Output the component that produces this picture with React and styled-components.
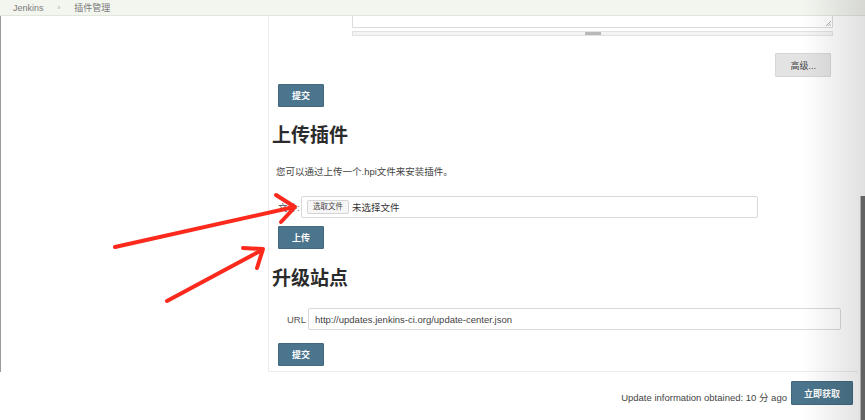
import React from 'react'
import styled, { createGlobalStyle } from 'styled-components'

const GlobalStyle = createGlobalStyle`
  html, body {
    margin: 0;
    padding: 0;
    background: #fff;
    overflow: hidden;
  }
  body {
    font-family: "Liberation Sans", "Noto Sans CJK SC", sans-serif;
    color: #333;
  }
`

const Page = styled.div`
  position: relative;
  width: 865px;
  height: 420px;
  overflow: hidden;
`

// ----- Breadcrumb bar
const Breadcrumb = styled.div`
  height: 15px;
  display: flex;
  align-items: center;
  gap: 14px;
  padding-left: 13px;
  background: #f3f5ef;
  border-bottom: 1px solid #e3e6dc;
  font-size: 9px;
  color: #777;
`

const Crumb = styled.span`
  color: #7a7a7a;
`

const CrumbSep = styled.span`
  font-size: 8px;
  color: #999;
`

// ----- Layout
const Layout = styled.div`
  display: flex;
`

const Sidebar = styled.div`
  width: 267px;
  flex-shrink: 0;
  border-left: 1px solid #9a9a9a;
`

const MainPanel = styled.section`
  width: 580px;
  padding: 0 0 5px 9px;
  border-left: 1px solid #ececec;
  border-bottom: 1px solid #ececec;
  display: flex;
  flex-direction: column;
`

const TextareaTail = styled.div`
  position: relative;
  margin-left: 74px;
  width: 479px;
  height: 11px;
  border: 1px solid #dcdcdc;
  border-top: none;
`

const ResizeGrip = styled.svg`
  position: absolute;
  right: 1px;
  bottom: 1px;
`

const GripBar = styled.div`
  margin: 3px 0 0 74px;
  width: 479px;
  height: 3px;
  border: 1px solid #e2e2e2;
  background: #f4f4f4;
  display: flex;
  justify-content: center;
  align-items: center;
`

const GripKnob = styled.div`
  width: 16px;
  height: 3px;
  background: #b9b9b9;
`

const Row = styled.div`
  display: flex;
  align-items: center;
  justify-content: ${p => (p.$end ? 'flex-end' : 'flex-start')};
  margin-top: ${p => p.$top}px;
  padding-right: ${p => p.$right || 0}px;
`

const Button = styled.button`
  height: ${p => p.$h || 23}px;
  padding: 0 ${p => p.$px || 13}px;
  border: 1px solid ${p => (p.$gray ? '#d6d6d6' : '#41687d')};
  border-radius: 1px;
  background: ${p => (p.$gray ? '#e3e3e3' : '#4b758c')};
  color: ${p => (p.$gray ? '#444' : '#fff')};
  font-family: inherit;
  font-size: 9px;
  font-weight: ${p => (p.$gray ? 'normal' : 'bold')};
  cursor: pointer;
`

const Heading = styled.h2`
  margin: ${p => p.$top}px 0 0 -6px;
  font-size: 19px;
  line-height: 23px;
  font-weight: bold;
  color: #2b2b2b;
`

const Description = styled.p`
  margin: 19px 0 0 -2px;
  font-size: 9.5px;
  line-height: 12px;
  color: #444;
`

const FieldLabel = styled.span`
  font-size: 9.5px;
  color: #555;
  width: ${p => p.$w}px;
  padding-left: ${p => p.$pl || 0}px;
  flex-shrink: 0;
`

const FileBox = styled.div`
  width: 450px;
  height: 20px;
  border: 1px solid #d9d9d9;
  border-radius: 2px;
  display: flex;
  align-items: center;
  gap: 3px;
  padding-left: 5px;
`

const FileButton = styled.span`
  height: 12px;
  padding: 0 5px;
  border: 1px solid #d4d4d4;
  border-radius: 2px;
  background: #f6f6f6;
  font-size: 7.5px;
  line-height: 12px;
  color: #444;
`

const FileHint = styled.span`
  font-size: 9.5px;
  color: #333;
`

const UrlInput = styled.input`
  width: 519px;
  height: 20px;
  box-sizing: content-box;
  padding: 0 6px;
  border: 1px solid #d9d9d9;
  border-radius: 2px;
  font-family: inherit;
  font-size: 9.5px;
  color: #444;
  outline: none;
`

// ----- Footer
const Footer = styled.div`
  display: flex;
  justify-content: flex-end;
  align-items: center;
  gap: 4px;
  margin-top: 9px;
  padding-right: 12px;
`

const UpdateInfo = styled.span`
  font-size: 9.5px;
  color: #444;
  margin-top: 8px;
`

// ----- Overlays
const RightShade = styled.div`
  position: absolute;
  top: 0;
  right: 0;
  bottom: 0;
  width: 62px;
  background: linear-gradient(to right, rgba(0, 0, 0, 0), rgba(0, 0, 0, 0.12));
  pointer-events: none;
`

const ScrollThumb = styled.div`
  position: absolute;
  right: 0;
  top: 196px;
  bottom: 0;
  width: 4px;
  background: #626262;
  border-left: 1px solid #aaa;
`

const Arrows = styled.svg`
  position: absolute;
  left: 0;
  top: 0;
  pointer-events: none;
`

const arrowStyle = {
  fill: 'none',
  stroke: '#fb2a1c',
  strokeWidth: 4,
  strokeLinecap: 'round',
  strokeLinejoin: 'round',
}

export default function App() {
  return (
    <Page>
      <GlobalStyle />
      <Breadcrumb>
        <Crumb>Jenkins</Crumb>
        <CrumbSep>›</CrumbSep>
        <Crumb>插件管理</Crumb>
      </Breadcrumb>
      <Layout>
        <Sidebar />
        <MainPanel>
          <TextareaTail>
            <ResizeGrip width="6" height="6" viewBox="0 0 6 6">
              <path d="M1 6 L6 1 M3.5 6 L6 3.5" stroke="#999" strokeWidth="0.8" />
            </ResizeGrip>
          </TextareaTail>
          <GripBar>
            <GripKnob />
          </GripBar>
          <Row $end $top={17} $right={27}>
            <Button $gray $h={24} $px={14}>高级...</Button>
          </Row>
          <Row $top={7}>
            <Button $px={13}>提交</Button>
          </Row>

          <Heading $top={17}>上传插件</Heading>
          <Description>您可以通过上传一个.hpi文件来安装插件。</Description>
          <Row $top={18}>
            <FieldLabel $w={23}>文件:</FieldLabel>
            <FileBox>
              <FileButton>选取文件</FileButton>
              <FileHint>未选择文件</FileHint>
            </FileBox>
          </Row>
          <Row $top={8}>
            <Button $px={13}>上传</Button>
          </Row>

          <Heading $top={18}>升级站点</Heading>
          <Row $top={18}>
            <FieldLabel $w={21} $pl={9}>URL</FieldLabel>
            <UrlInput readOnly value="http://updates.jenkins-ci.org/update-center.json" />
          </Row>
          <Row $top={13}>
            <Button $px={13}>提交</Button>
          </Row>
        </MainPanel>
      </Layout>
      <Footer>
        <UpdateInfo>Update information obtained: 10 分 ago</UpdateInfo>
        <Button $h={24} $px={12}>立即获取</Button>
      </Footer>

      <RightShade />
      <ScrollThumb />

      <Arrows width="865" height="420" viewBox="0 0 865 420">
        <g style={arrowStyle}>
          <path d="M115 247 L294 207" />
          <path d="M276 195 L295 207 L281 222" />
          <path d="M167 301 L262 250" />
          <path d="M243 248 L263 249 L257 268" />
        </g>
      </Arrows>
    </Page>
  )
}
